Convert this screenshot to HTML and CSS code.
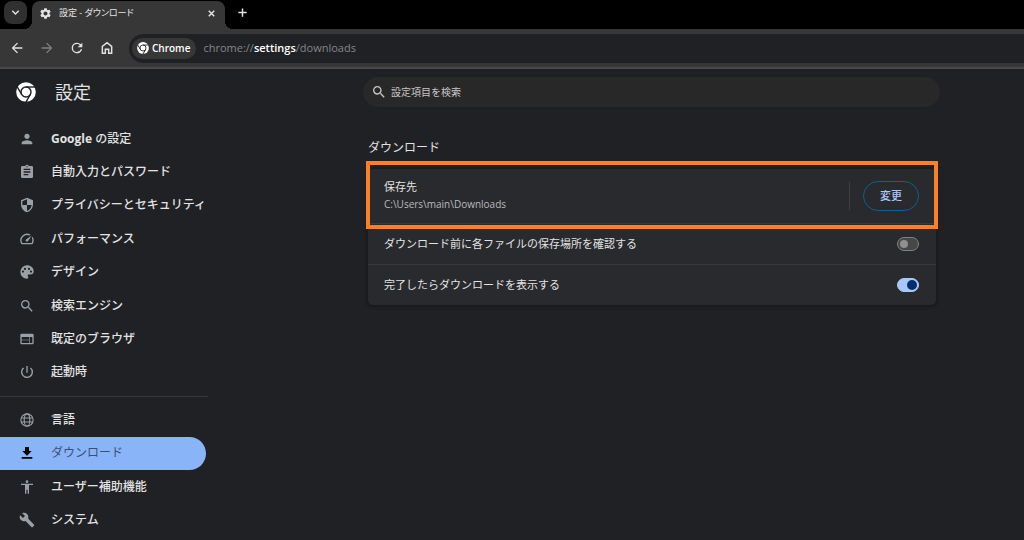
FILE: index.html
```html
<!DOCTYPE html>
<html lang="ja">
<head>
<meta charset="utf-8">
<title>設定 - ダウンロード</title>
<link rel="stylesheet" href="styles.css">
</head>
<body>
<svg class="defs" aria-hidden="true">
  <symbol id="chrome" viewBox="0 0 24 24">
    <circle cx="12" cy="12" r="11.8" fill="currentColor"/>
    <g fill="none" stroke="#202124" stroke-width="1.700">
      <circle cx="12" cy="12" r="6"/>
      <path d="M12 6h11"/>
      <path d="M12 6h11" transform="rotate(120 12 12)"/>
      <path d="M12 6h11" transform="rotate(240 12 12)"/>
    </g>
  </symbol>
  <symbol id="search" viewBox="0 0 24 24"><path d="M15.5 14h-.79l-.28-.27A6.471 6.471 0 0 0 16 9.5 6.5 6.5 0 1 0 9.5 16c1.61 0 3.09-.59 4.23-1.57l.27.28v.79l5 4.99L20.49 19l-4.99-5zm-6 0C7.01 14 5 11.99 5 9.5S7.01 5 9.5 5 14 7.01 14 9.5 11.99 14 9.5 14z"/></symbol>
</svg>

<header class="browser">
  <div class="tabstrip">
    <button class="tab-search" aria-label="タブを検索"><svg class="stroke" viewBox="0 0 12 12"><path stroke-width="1.600" d="M2.5 4.2 6 7.7l3.500-3.500"/></svg></button>
    <div class="tab">
      <svg class="tab-icon" viewBox="2 2 20 20"><path d="M19.140 12.940c.040-.300.060-.610.060-.940 0-.320-.020-.640-.070-.940l2.030-1.580a.49.49 0 0 0 .120-.610l-1.920-3.320a.488.488 0 0 0-.590-.220l-2.390.960c-.500-.380-1.030-.700-1.620-.940l-.360-2.540a.484.484 0 0 0-.480-.410h-3.840c-.240 0-.430.170-.470.410l-.360 2.540c-.590.240-1.130.570-1.620.940l-2.390-.960c-.220-.080-.470 0-.590.220L2.740 8.870c-.120.210-.080.470.120.610l2.030 1.580c-.050.300-.090.630-.090.940s.020.640.070.940l-2.030 1.580a.49.49 0 0 0-.120.610l1.920 3.320c.120.220.370.290.590.220l2.390-.960c.500.380 1.030.700 1.620.940l.360 2.540c.050.240.240.410.480.410h3.840c.240 0 .440-.170.470-.410l.360-2.540c.590-.240 1.130-.560 1.620-.940l2.390.960c.220.080.470 0 .590-.220l1.920-3.320c.120-.220.070-.470-.120-.610l-2.010-1.580zM12 15.600c-1.980 0-3.600-1.620-3.600-3.600s1.620-3.600 3.600-3.600 3.600 1.620 3.600 3.600-1.620 3.600-3.600 3.600z"/></svg>
      <span class="tab-title">設定 - ダウンロード</span>
      <button class="tab-button" aria-label="閉じる"><svg class="stroke" viewBox="0 0 12 12"><path stroke-width="1.600" d="m3 3 6 6M9 3 3 9"/></svg></button>
    </div>
    <button class="tab-button new-tab" aria-label="新しいタブ"><svg class="stroke" viewBox="0 0 12 12"><path stroke-width="1.600" d="M6 1.500v9M1.500 6h9"/></svg></button>
  </div>
  <div class="toolbar">
    <button class="tool" aria-label="戻る"><svg viewBox="0 0 24 24"><path d="M20 11H7.830l5.590-5.590L12 4l-8 8 8 8 1.410-1.410L7.830 13H20v-2z"/></svg></button>
    <button class="tool off" aria-label="進む"><svg viewBox="0 0 24 24"><path d="m12 4-1.410 1.410L16.170 11H4v2h12.170l-5.580 5.590L12 20l8-8z"/></svg></button>
    <button class="tool" aria-label="再読み込み"><svg viewBox="0 0 24 24"><path d="M17.650 6.350A7.958 7.958 0 0 0 12 4a8 8 0 1 0 7.730 10h-2.080A5.990 5.990 0 0 1 12 18a6 6 0 1 1 0-12c1.660 0 3.140.690 4.220 1.780L13 11h7V4l-2.350 2.350z"/></svg></button>
    <button class="tool" aria-label="ホーム"><svg class="stroke" viewBox="0 0 24 24"><path stroke-width="2.200" d="M5 20V9.500L12 4l7 5.500V20h-4.500v-6h-5v6z"/></svg></button>
    <div class="omnibox">
      <span class="chip"><svg><use href="#chrome"/></svg>Chrome</span>
      <span class="url">chrome://<b>settings</b>/downloads</span>
    </div>
  </div>
</header>

<div class="page">
  <aside class="sidebar">
    <div class="brand"><svg><use href="#chrome"/></svg><h1>設定</h1></div>
    <nav>
      <div class="group main-group">
        <a href="#people"><svg viewBox="0 0 24 24"><path d="M12 12c2.210 0 4-1.790 4-4s-1.790-4-4-4-4 1.790-4 4 1.790 4 4 4zm0 2c-2.670 0-8 1.340-8 4v2h16v-2c0-2.660-5.330-4-8-4z"/></svg><span><b>Google</b> の設定</span></a>
        <a href="#autofill"><svg viewBox="0 0 24 24"><path d="M19 3h-4.180C14.400 1.840 13.300 1 12 1s-2.400.840-2.820 2H5a2 2 0 0 0-2 2v14a2 2 0 0 0 2 2h14a2 2 0 0 0 2-2V5a2 2 0 0 0-2-2zm-7 0a1 1 0 1 1 0 2 1 1 0 0 1 0-2zm2 14H7v-2h7v2zm3-4H7v-2h10v2zm0-4H7V7h10v2z"/></svg><span>自動入力とパスワード</span></a>
        <a href="#privacy"><svg viewBox="0 0 24 24"><path d="M12 1 3 5v6c0 5.550 3.840 10.740 9 12 5.160-1.260 9-6.450 9-12V5l-9-4zm0 10.990h7c-.530 4.120-3.280 7.790-7 8.940V12H5V6.300l7-3.110v8.800z"/></svg><span>プライバシーとセキュリティ</span></a>
        <a href="#performance"><svg viewBox="0 0 24 24"><path d="m20.380 8.570-1.230 1.850a8 8 0 0 1-.220 7.580H5.070A8 8 0 0 1 15.580 6.850l1.850-1.230A10 10 0 0 0 3.350 19a2 2 0 0 0 1.720 1h13.850a2 2 0 0 0 1.740-1 10 10 0 0 0-.270-10.440zm-9.790 6.840a2 2 0 0 0 2.830 0l5.660-8.490-8.490 5.660a2 2 0 0 0 0 2.830z"/></svg><span>パフォーマンス</span></a>
        <a href="#appearance"><svg viewBox="0 0 24 24"><path d="M12 2a10 10 0 0 0 0 20c1.100 0 2-.900 2-2 0-.500-.200-1-.500-1.300-.300-.400-.500-.800-.500-1.300 0-.900.700-1.600 1.600-1.600H17a5 5 0 0 0 5-5C22 6 17.500 2 12 2zM6 13a1.600 1.600 0 1 1 0-3.200A1.600 1.600 0 0 1 6 13zm3-4a1.600 1.600 0 1 1 0-3.200A1.600 1.600 0 0 1 9 9zm6 0a1.600 1.600 0 1 1 0-3.200A1.600 1.600 0 0 1 15 9zm3 4a1.600 1.600 0 1 1 0-3.200 1.600 1.600 0 0 1 0 3.200z"/></svg><span>デザイン</span></a>
        <a href="#search-engine"><svg><use href="#search"/></svg><span>検索エンジン</span></a>
        <a href="#default-browser"><svg viewBox="0 0 24 24"><path d="M20 4H4a2 2 0 0 0-2 2v12c0 1.100.900 2 2 2h16a2 2 0 0 0 2-2V6a2 2 0 0 0-2-2zm-5 14H4v-4h11v4zm0-5H4V9h11v4zm5 5h-4V9h4v9z"/></svg><span>既定のブラウザ</span></a>
        <a href="#startup"><svg viewBox="0 0 24 24"><path d="M13 3h-2v10h2V3zm4.830 2.170-1.420 1.420A6.920 6.920 0 0 1 19 12a7 7 0 1 1-11.420-5.420L6.170 5.170A9 9 0 1 0 21 12a8.940 8.940 0 0 0-3.170-6.830z"/></svg><span>起動時</span></a>
      </div>
      <hr>
      <div class="group sub-group">
        <a href="#languages"><svg class="stroke globe" viewBox="0 0 24 24"><circle cx="12" cy="12" r="9.200"/><ellipse cx="12" cy="12" rx="4.200" ry="9.200"/><path d="M3.500 9h17M3.500 15h17"/></svg><span>言語</span></a>
        <a href="#downloads" class="active" aria-current="page"><svg viewBox="0 0 24 24"><path d="M19 9h-4V3H9v6H5l7 7 7-7zM4 18v2.500h16V18z"/></svg><span>ダウンロード</span></a>
        <a href="#accessibility"><svg viewBox="0 0 24 24"><path d="M12 2a2 2 0 1 1 0 4 2 2 0 0 1 0-4zm9 7h-6v13h-2v-6h-2v6H9V9H3V7h18v2z"/></svg><span>ユーザー補助機能</span></a>
        <a href="#system"><svg viewBox="0 0 24 24"><path d="m22.700 19-9.100-9.100c.900-2.300.400-5-1.500-6.900-2-2-5-2.400-7.400-1.300L9 6 6 9 1.600 4.700C.400 7.100.900 10.100 2.900 12.100c1.900 1.900 4.600 2.400 6.900 1.500l9.100 9.100c.400.400 1 .400 1.400 0l2.300-2.300c.500-.400.500-1.100.100-1.400z"/></svg><span>システム</span></a>
      </div>
    </nav>
  </aside>

  <main>
    <label class="search"><svg><use href="#search"/></svg><input type="search" placeholder="設定項目を検索" aria-label="設定項目を検索"></label>
    <section class="settings">
      <h2>ダウンロード</h2>
      <div class="card">
        <div class="row location">
          <div class="text"><div>保存先</div><div class="path">C:\Users\main\Downloads</div></div>
          <div class="action"><button class="change">変更</button></div>
          <div class="highlight"></div>
        </div>
        <label class="row"><span>ダウンロード前に各ファイルの保存場所を確認する</span><input type="checkbox" role="switch" class="toggle"></label>
        <label class="row"><span>完了したらダウンロードを表示する</span><input type="checkbox" role="switch" class="toggle" checked></label>
      </div>
    </section>
  </main>
</div>
</body>
</html>
```
FILE: styles.css
```css
* { box-sizing: border-box; }

body {
  margin: 0;
  min-height: 100vh;
  overflow: hidden;
  background: #202124;
  color: #e3e3e3;
  font: 12px/16px "Open Sans", "Noto Sans CJK JP", sans-serif;
}

svg { display: block; flex: none; fill: currentColor; }
.defs { position: absolute; width: 0; height: 0; }
.stroke { fill: none; stroke: currentColor; stroke-width: 2; }
button { padding: 0; border: 0; background: none; color: inherit; font: inherit; }

/* Browser frame */
.browser { background: #373737; border-bottom: 2px solid #474747; }
.tabstrip { display: flex; height: 29px; background: #000; }
.tab-search {
  display: grid;
  place-items: center;
  width: 23px;
  height: 23px;
  margin: 1px 5px 0 4px;
  border-radius: 8px;
  background: #303030;
}
.tab-search svg { width: 11px; height: 11px; }
.tab {
  position: relative;
  display: flex;
  align-items: center;
  width: 193px;
  margin-top: 1px;
  padding: 0 7px 4px;
  border-radius: 8px 8px 0 0;
  background: #373737;
}
.tab::before,
.tab::after { content: ""; position: absolute; bottom: 0; width: 8px; height: 8px; }
.tab::before { right: 100%; background: radial-gradient(circle at 0 0, #000 8px, #373737 8px); }
.tab::after { left: 100%; background: radial-gradient(circle at 100% 0, #000 8px, #373737 8px); }
.tab-icon { width: 11px; height: 11px; margin: 0 8px 0 1px; }
.tab-title { flex: 1; font-size: 9px; font-feature-settings: "palt"; white-space: nowrap; }
.tab-button { display: grid; place-items: center; width: 13px; height: 13px; }
.tab-button svg { width: 11px; height: 11px; }
.new-tab { margin: 6px 0 0 11px; }

.toolbar { display: flex; align-items: center; height: 38px; padding-left: 9px; gap: 14px; }
.tool { width: 16px; height: 16px; }
.tool svg { width: 16px; height: 16px; }
.off { color: #808080; }
.omnibox {
  flex: 1;
  display: flex;
  align-items: center;
  gap: 7px;
  height: 29px;
  padding-left: 3px;
  border-radius: 15px 0 0 15px;
  background: #202124;
}
.chip {
  display: flex;
  align-items: center;
  gap: 3px;
  height: 21px;
  padding: 0 6px 0 5px;
  border-radius: 11px;
  background: #373737;
  font-size: 10px;
  font-weight: 600;
  color: #fff;
}
.chip svg { width: 12px; height: 12px; }
.url { font-size: 11px; color: #85868a; }
.url b { font-weight: 600; color: #fff; }

/* Page */
.page { display: grid; grid-template-columns: 208px 1fr; }

.brand { display: flex; align-items: center; gap: 19px; height: 45px; padding-left: 16px; }
.brand svg { width: 20px; height: 20px; color: #fff; }
h1 { margin: 0; font-size: 18px; line-height: 24px; font-weight: 400; }

nav { padding-top: 8px; }
.group { display: grid; grid-auto-rows: 1fr; }
.main-group { height: 267px; }
.sub-group { height: 134px; }
.group a {
  display: flex;
  align-items: center;
  gap: 16px;
  margin-right: 2px;
  padding-left: 19px;
  border-radius: 0 17px 17px 0;
  color: #e3e3e3;
  font-weight: 500;
  white-space: nowrap;
  text-decoration: none;
}
.group svg { width: 16px; height: 16px; color: #9aa0a6; }
.group .globe { stroke-width: 1.7; }
.group .active { background: #8ab4f8; color: #3c4f73; font-weight: 400; }
.group .active svg { color: #000; }
hr { height: 1px; margin: 7px 0 6px; border: 0; background: #35363a; }

main { padding: 8px 84px 0 155px; }
.search {
  display: flex;
  align-items: center;
  gap: 4px;
  height: 30px;
  padding-left: 8px;
  border-radius: 15px;
  background: #282828;
  color: #c7c7c7;
}
.search svg { width: 16px; height: 16px; }
.search input {
  flex: 1;
  padding: 0;
  border: 0;
  outline: 0;
  background: none;
  color: inherit;
  font: 10px/16px "Open Sans", "Noto Sans CJK JP", sans-serif;
}
.search input::placeholder { color: #c7c7c7; }

.settings { padding: 33px 4px 0 5px; }
h2 { margin: 0 0 13px; font-size: 12px; line-height: 16px; font-weight: 400; }
.card {
  border-radius: 5px;
  background: #292a2d;
  box-shadow: 0 1px 3px 1px #18191b;
  font-size: 11px;
}
.row { display: flex; align-items: center; justify-content: space-between; height: 41px; padding: 0 17px 0 16px; }
.row + .row { border-top: 1px solid #38393c; }
.location { position: relative; height: 54px; }
.path { font-size: 10px; line-height: 18px; color: #b8bbbf; }
.action { display: flex; align-items: center; height: 28px; padding-left: 13px; border-left: 1px solid #3c4043; }
.change {
  width: 56px;
  height: 30px;
  border: 1px solid #0f6088;
  border-radius: 15px;
  color: #a8c7fa;
  font-weight: 500;
}
.highlight { position: absolute; inset: -8px -2px -6px; border: 4px solid #ff7f27; }

.toggle {
  appearance: none;
  display: flex;
  align-items: center;
  width: 22px;
  height: 14px;
  margin: 0;
  padding: 0 2px;
  border: 1px solid #808080;
  border-radius: 7px;
  background: #474747;
}
.toggle::before { content: ""; width: 8px; height: 8px; border-radius: 50%; background: #8f8f8f; }
.toggle:checked { justify-content: flex-end; padding: 0 1px; border-color: #a8c7fa; background: #a8c7fa; }
.toggle:checked::before { width: 10px; height: 10px; background: #062e6f; }
```
